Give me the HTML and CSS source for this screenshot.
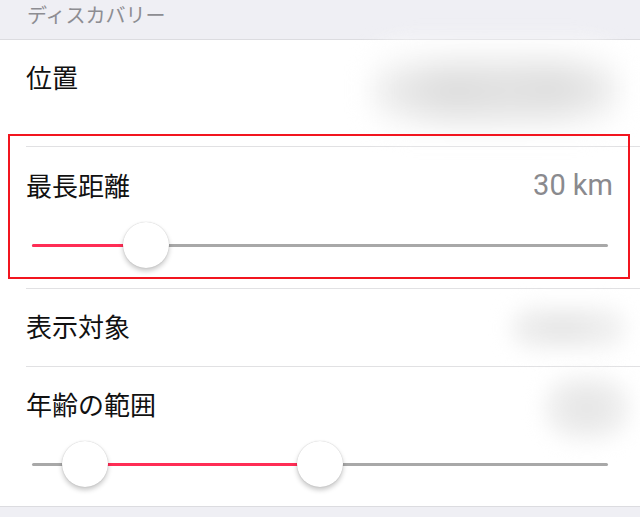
FILE: index.html
```html
<!DOCTYPE html>
<html lang="ja">
<head>
<meta charset="utf-8">
<link rel="stylesheet" href="styles.css">
</head>
<body>
<div class="screen">
  <div class="section-header">ディスカバリー</div>
  <div class="list">
    <div class="row row-location">
      <span class="label">位置</span>
      <div class="blur blur-location"></div>
    </div>
    <div class="row row-slider">
      <div class="row-top">
        <span class="label">最長距離</span>
        <span class="value">30 km</span>
      </div>
      <div class="slider">
        <div class="track"></div>
        <div class="fill" style="left:0;width:19.8%"></div>
        <div class="thumb" style="left:19.8%"></div>
      </div>
    </div>
    <div class="row row-plain">
      <span class="label">表示対象</span>
      <div class="blur blur-show"></div>
    </div>
    <div class="row row-slider row-last">
      <div class="row-top">
        <span class="label">年齢の範囲</span>
        <div class="blur blur-age"></div>
      </div>
      <div class="slider">
        <div class="track"></div>
        <div class="fill" style="left:9.2%;width:40.8%"></div>
        <div class="thumb" style="left:9.2%"></div>
        <div class="thumb" style="left:50%"></div>
      </div>
    </div>
    <div class="highlight"></div>
  </div>
  <div class="footer"></div>
</div>
</body>
</html>
```

FILE: styles.css
```css
html, body {
  margin: 0;
  padding: 0;
  background: #ffffff;
}
.screen {
  width: 640px;
  height: 517px;
  overflow: hidden;
  font-family: "Noto Sans CJK JP", "Noto Sans", sans-serif;
  display: flex;
  flex-direction: column;
}
.section-header {
  height: 39px;
  flex-shrink: 0;
  background: #efeff4;
  border-bottom: 1px solid #dcdce0;
  color: #8d8d92;
  font-size: 20px;
  line-height: 30px;
  padding-left: 27px;
  box-sizing: content-box;
}
.list {
  position: relative;
  background: #fff;
  flex-shrink: 0;
}
.row {
  margin-left: 26px;
  padding-right: 26px;
  border-bottom: 1px solid #e1e1e3;
}
.label {
  font-size: 26px;
  line-height: 32px;
  color: #111;
  white-space: nowrap;
}
.row-location {
  height: 107px;
  display: flex;
  justify-content: space-between;
  align-items: flex-start;
  box-sizing: border-box;
  padding-top: 21px;
}
.blur {
  filter: blur(10px);
  border-radius: 30px;
}
.blur-location {
  width: 250px;
  height: 90px;
  margin-top: -17px;
  margin-right: -6px;
  filter: blur(12px);
  background:
    radial-gradient(ellipse 40% 42% at 34% 52%, #dadada 0%, rgba(224,224,224,0.7) 50%, rgba(255,255,255,0) 100%),
    radial-gradient(ellipse 34% 42% at 72% 50%, #dbdbdb 0%, rgba(224,224,224,0.7) 50%, rgba(255,255,255,0) 100%),
    radial-gradient(ellipse 55% 55% at 50% 55%, #e9e9e9 0%, #f4f4f4 60%, #fcfcfc 100%);
}
.row-plain {
  height: 78px;
  box-sizing: border-box;
  padding-top: 21px;
  display: flex;
  justify-content: space-between;
  align-items: flex-start;
}
.blur-show {
  width: 115px;
  height: 44px;
  margin-top: -4px;
  margin-right: -12px;
  background: radial-gradient(ellipse at 45% 50%, #e2e2e2 0%, #eeeeee 45%, #f8f8f8 100%);
}
.row-slider {
  padding-top: 22px;
  padding-bottom: 20px;
  box-sizing: border-box;
}
.row-top {
  display: flex;
  justify-content: space-between;
  align-items: flex-start;
  height: 32px;
}
.value {
  font-family: "Roboto", "Liberation Sans", sans-serif;
  font-size: 29px;
  line-height: 32px;
  color: #8a8a8e;
  margin-right: 1px;
}
.row-last {
  border-bottom: none;
  height: 139px;
  padding-top: 21px;
  padding-bottom: 19px;
}
.blur-age {
  width: 86px;
  height: 64px;
  margin-top: -12px;
  margin-right: -16px;
  flex-shrink: 0;
  background: radial-gradient(ellipse at center, #e3e3e3 0%, #eeeeee 50%, #f8f8f8 100%);
}
.slider {
  position: relative;
  height: 46px;
  margin-top: 21px;
  margin-left: 6px;
  width: 576px;
}
.track {
  position: absolute;
  left: 0;
  right: 0;
  top: 22px;
  height: 3px;
  background: #a8a8a8;
  border-radius: 2px;
}
.fill {
  position: absolute;
  top: 22px;
  height: 3px;
  background: #ff2d55;
  border-radius: 2px;
}
.thumb {
  position: absolute;
  top: 0;
  width: 46px;
  height: 46px;
  margin-left: -23px;
  border-radius: 50%;
  background: #fff;
  box-shadow: 0 3px 5px rgba(0,0,0,0.22), 0 0 1px rgba(0,0,0,0.25);
}
.highlight {
  position: absolute;
  left: 8px;
  top: 94px;
  width: 618px;
  height: 141px;
  border: 2px solid #f2151f;
  pointer-events: none;
}
.footer {
  flex: 1;
  background: #efeff4;
  border-top: 1px solid #dcdce0;
}
```
